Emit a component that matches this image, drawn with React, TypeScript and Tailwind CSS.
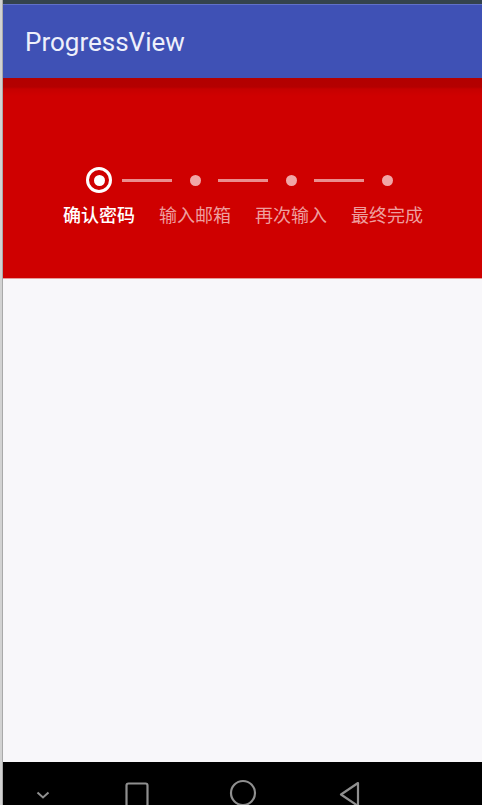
const steps = ["确认密码", "输入邮箱", "再次输入", "最终完成"];

function Line() {
  return <span className="block w-[50px] h-[3px] bg-[#ea8e8e]" />;
}

function Dot() {
  return <span className="block w-[11px] h-[11px] rounded-full bg-[#f1a6a6]" />;
}

export default function App() {
  return (
    <div className="w-[482px] h-[805px] flex overflow-hidden">
      {/* left edge strip */}
      <div className="w-[3px] h-full bg-[#d2d2d2] border-r border-[#a9a9a9]" />

      <div className="flex-1 flex flex-col">
        {/* status bar */}
        <div className="h-[4px] bg-[#34434d]" />

        {/* toolbar */}
        <div className="h-[74px] bg-[#3f51b5] border-t border-[#6070c8] flex items-center pl-[22px]">
          <h1 className="font-['Roboto',sans-serif] text-[26px] text-[#eef0fb] leading-none">ProgressView</h1>
        </div>

        {/* progress header */}
        <div className="h-[201px] bg-[linear-gradient(to_bottom,#b20000_0px,#b40000_9px,#c60000_11px,#cf0000_18px,#cf0000_100%)] border-b border-[#e59b9b] pt-[89px]">
          <div className="flex items-center pl-[83px]">
            <span className="w-[26px] h-[26px] rounded-full border-[3px] border-white flex items-center justify-center">
              <span className="w-[11px] h-[11px] rounded-full bg-white" />
            </span>
            <span className="ml-[10px]">
              <Line />
            </span>
            <span className="ml-[18px]">
              <Dot />
            </span>
            <span className="ml-[17px]">
              <Line />
            </span>
            <span className="ml-[18px]">
              <Dot />
            </span>
            <span className="ml-[17px]">
              <Line />
            </span>
            <span className="ml-[18px]">
              <Dot />
            </span>
          </div>

          <div className="flex pl-[48px] mt-[11px]">
            {steps.map((s, i) => (
              <div
                key={s}
                className={`w-[96px] text-center text-[18px] leading-[20px] font-['Noto_Sans_CJK_SC',sans-serif] ${
                  i === 0 ? "text-white font-medium" : "text-[#ee9e9e]"
                }`}
              >
                {s}
              </div>
            ))}
          </div>
        </div>

        {/* body */}
        <div className="flex-1 bg-[#f8f7fa]" />

        {/* nav bar */}
        <div className="h-[43px] bg-black flex items-start overflow-hidden">
          <svg className="ml-[33px] mt-[29px]" width="14" height="8" viewBox="0 0 14 8" fill="none">
            <path d="M1.5 1.5 L7 6.5 L12.5 1.5" stroke="#8f8f8f" strokeWidth="2" />
          </svg>
          <svg className="ml-[75px] mt-[20px]" width="24" height="26" viewBox="0 0 24 26" fill="none">
            <rect x="1.5" y="1.5" width="21" height="23" rx="2" stroke="#8f8f8f" strokeWidth="2.2" />
          </svg>
          <svg className="ml-[80px] mt-[17px]" width="28" height="28" viewBox="0 0 28 28" fill="none">
            <circle cx="14" cy="14" r="12" stroke="#8f8f8f" strokeWidth="2.2" />
          </svg>
          <svg className="ml-[81px] mt-[19px]" width="24" height="28" viewBox="0 0 24 28" fill="none">
            <path d="M20 2 L3 13.5 L20 25 Z" stroke="#8f8f8f" strokeWidth="2.2" strokeLinejoin="round" />
          </svg>
        </div>
      </div>
    </div>
  );
}
